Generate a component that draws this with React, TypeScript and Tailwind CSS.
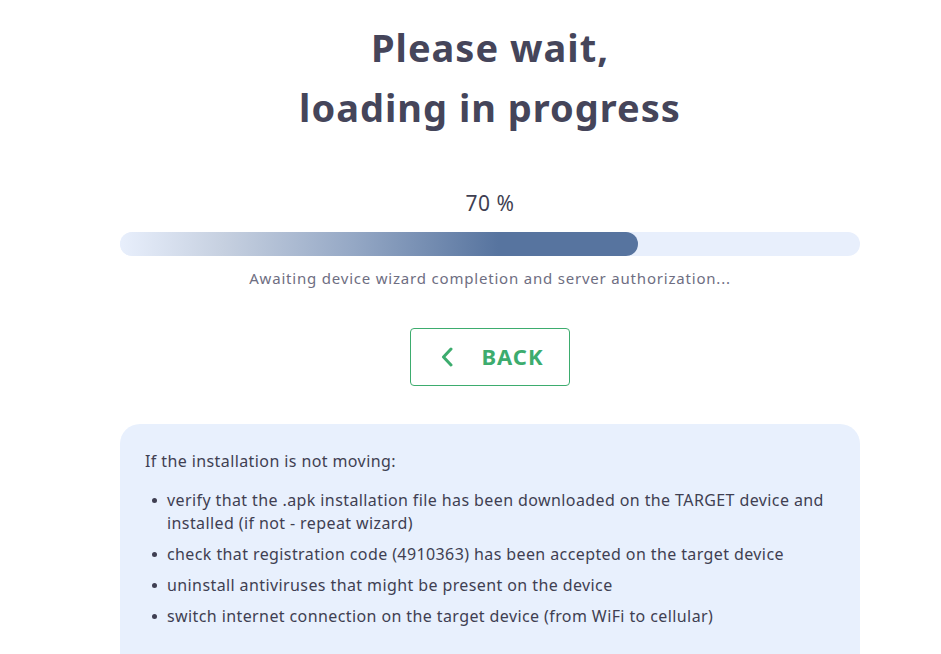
const tips = [
  "verify that the .apk installation file has been downloaded on the TARGET device and installed (if not - repeat wizard)",
  "check that registration code (4910363) has been accepted on the target device",
  "uninstall antiviruses that might be present on the device",
  "switch internet connection on the target device (from WiFi to cellular)",
]

export default function App() {
  const progress = 70

  return (
    <div className="min-h-screen w-full bg-white font-['Noto_Sans',sans-serif] text-[#3f3f52]">
      <div className="ml-[120px] flex w-[740px] flex-col items-center pt-[17px]">
        <h1 className="text-center text-[38px] font-bold leading-[60px] tracking-[1px] text-[#45455a]">
          Please wait,
          <br />
          loading in progress
        </h1>

        <div className="mt-[54px] text-[21px] leading-[24px] tracking-[0.5px] text-[#3f3f52]">{progress} %</div>

        <div className="mt-[17px] h-6 w-full overflow-hidden rounded-full bg-[#e8effc]">
          <div
            className="h-full rounded-full bg-[linear-gradient(90deg,#e8effc_0%,#c6d0e0_20%,#95a8c5_45%,#57749f_73%,#57749f_100%)]"
            style={{ width: `${progress}%` }}
          />
        </div>

        <p className="mt-[12px] text-[15px] leading-[20px] tracking-[0.8px] text-[#6e6e82]">
          Awaiting device wizard completion and server authorization...
        </p>

        <button className="mt-[40px] flex h-[58px] w-[160px] items-center justify-center gap-[28px] rounded-[4px] border border-[#3dac6e] bg-white pb-[2px] pl-[5px] text-[22px] font-bold tracking-[1px] text-[#3dac6e]">
          <svg width="12" height="20" viewBox="0 0 12 20" fill="none" className="mt-[2px] shrink-0">
            <path d="M10 2 L2.5 10 L10 18" stroke="currentColor" strokeWidth="3" strokeLinecap="round" strokeLinejoin="round" />
          </svg>
          BACK
        </button>

        <div className="mt-[38px] w-full rounded-t-[20px] bg-[#e8f0fd] px-[25px] pb-[30px] pt-[26px] text-[16px] tracking-[0.4px] text-[#3f3f52]">
          <p className="leading-[22px]">If the installation is not moving:</p>
          <ul className="mt-[17px] flex flex-col gap-[8px] pl-[22px]">
            {tips.map((t) => (
              <li key={t} className="relative leading-[23px]">
                <span className="absolute left-[-15px] top-[9px] h-[5px] w-[5px] rounded-full bg-[#3f3f52]" />
                {t}
              </li>
            ))}
          </ul>
        </div>
      </div>
    </div>
  )
}
